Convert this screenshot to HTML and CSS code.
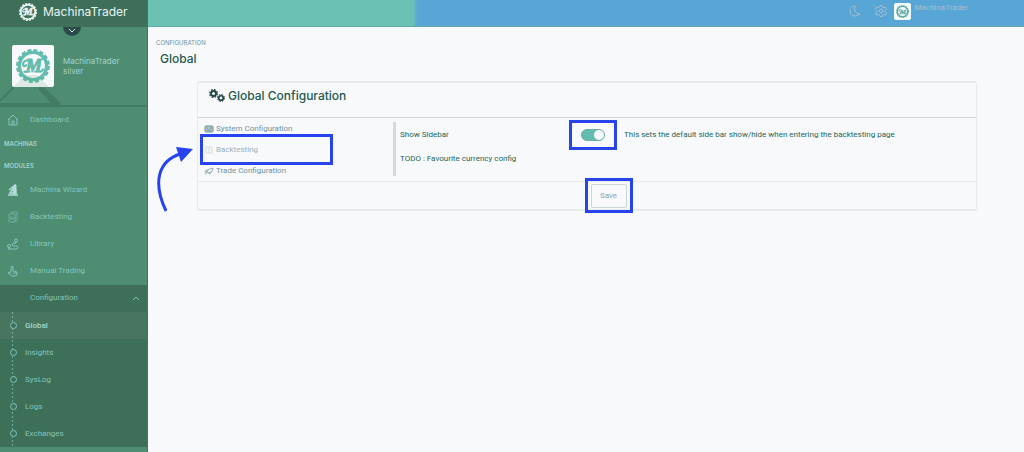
FILE: index.html
```html
<!DOCTYPE html>
<html lang="en">
<head>
<meta charset="utf-8">
<title>MachinaTrader - Global Configuration</title>
<link rel="stylesheet" href="styles.css">
</head>
<body>
<svg class="defs" aria-hidden="true">
  <symbol id="cog-logo" viewBox="0 0 40 40">
    <circle cx="20" cy="20" r="16" fill="none" stroke="currentColor" stroke-width="4"/>
    <circle cx="20" cy="20" r="18" fill="none" stroke="currentColor" stroke-width="4" stroke-dasharray="4.600 2.469"/>
    <path d="M15 14c-5-2-8 3-6 6 2 1 3-1 3-2M9 26c5 3 6-2 8-7M28 26c2 1 4-1 4-3" fill="none" stroke="currentColor" stroke-width="2.500"/>
  </symbol>
  <symbol id="gear" viewBox="0 0 16 16">
    <circle cx="8" cy="8" r="4.500" fill="none" stroke="currentColor" stroke-width="3.400"/>
    <circle cx="8" cy="8" r="7" fill="none" stroke="currentColor" stroke-width="2" stroke-dasharray="3.200 2.298"/>
  </symbol>
</svg>
<div class="app">
  <aside class="sidebar">
    <a class="brand" href="#"><svg class="brand-logo" viewBox="0 0 40 40"><use href="#cog-logo"/><text x="21" y="27" text-anchor="middle" class="logo-letter">M</text></svg><span>MachinaTrader</span></a>
    <div class="user">
      <svg class="user-art" viewBox="0 0 148 80" aria-hidden="true"><path d="M0 74 14 60M40 58 60 77M0 77H58" fill="none" stroke="#437c64" stroke-width="2"/><path d="M40 59 50 68 61 79H54L38 62z"/></svg>
      <button class="collapse" aria-label="Collapse profile"><svg viewBox="0 0 18 10"><path d="M6 2l3 3 3-3"/></svg></button>
      <span class="avatar"><svg viewBox="0 0 40 40"><use href="#cog-logo"/><text x="21" y="27" text-anchor="middle" class="logo-letter">M</text></svg></span>
      <span class="user-name">MachinaTrader<br>silver</span>
      <svg class="avatar-shade" viewBox="0 0 42 18" aria-hidden="true"><path d="M0 18 13 5h12l13 13z"/></svg>
    </div>
    <nav>
      <a class="item" href="#"><svg viewBox="0 0 12 12"><path d="M1 6l5-5 5 5M2 5v6h8V5M5 11V7h2v4"/></svg>Dashboard</a>
      <h2>MACHINAS</h2>
      <h2>MODULES</h2>
      <a class="item" href="#"><svg class="pale" viewBox="0 0 12 12"><path d="M1 11h10M3 9l5-7 1 7zM2 6l5-4" stroke-width="1.500"/><path d="M7 1h2v9H6z" fill="currentColor"/></svg>Machina Wizard</a>
      <a class="item" href="#"><svg class="dim" viewBox="0 0 12 12"><path d="M2 3h6v8H2zM4 3V1h6v9H8M4 5v4M6 6v3M7 7h2"/></svg>Backtesting</a>
      <a class="item" href="#"><svg viewBox="0 0 12 12"><circle cx="2" cy="8" r="1.500"/><circle cx="9" cy="2.500" r="1.500"/><path d="M1 11h9q2-3-1-3H6q-2-2 0-3h3V4M2 9v2"/></svg>Library</a>
      <a class="item" href="#"><svg viewBox="0 0 12 12"><path d="M4 7V2q1-2 2 0v4l4 1v2q0 2-2 2H5L1 8q0-2 3 0M6 8h4"/></svg>Manual Trading</a>
      <div class="group">
        <a class="item open" href="#"><span class="blank"></span>Configuration<svg class="caret" viewBox="0 0 8 6"><path d="M1 5l3-3 3 3"/></svg></a>
        <ul>
          <li><a class="active" href="#">Global</a></li>
          <li><a href="#">Insights</a></li>
          <li><a href="#">SysLog</a></li>
          <li><a href="#">Logs</a></li>
          <li><a href="#">Exchanges</a></li>
        </ul>
      </div>
    </nav>
  </aside>
  <div class="page">
    <header class="topbar">
      <button aria-label="Dark mode"><svg viewBox="0 0 12 12"><path d="M6 1C2 1 1 4 1 6q0 5 5 5 3 0 5-2-4 0-5-3-1-2 0-5z"/></svg></button>
      <button aria-label="Settings"><svg viewBox="0 0 12 12"><path d="M5 .5h2l.5 1.500 1 .5 2-.5 1 2L10 5.500v1L11.500 8l-1 2-2-.5-1 .5L7 11.500H5L4.500 10l-1-.5-2 .5-1-2L2 6.500v-1L.5 4l1-2 2 .5 1-.5z"/><circle cx="6" cy="6" r="1.800"/></svg></button>
      <span class="mini"><svg viewBox="0 0 40 40"><use href="#cog-logo"/><text x="21" y="27" text-anchor="middle" class="logo-letter">M</text></svg></span>
      <span class="account">MachinaTrader</span>
    </header>
    <main>
      <p class="crumb">CONFIGURATION</p>
      <h1>Global</h1>
      <form class="card">
        <h2 class="card-title"><svg viewBox="0 0 18 16" aria-hidden="true"><use href="#gear" x="1" y="1" width="9" height="9"/><use href="#gear" x="9" y="6" width="8" height="8"/></svg>Global Configuration</h2>
        <div class="card-body">
          <div class="tabs">
            <a href="#"><svg viewBox="0 0 10 8"><rect x="1" y="1" width="8" height="6" rx="1" fill="currentColor" fill-opacity=".5"/><path d="M3 3h1M6 3h2M3 5h4"/></svg>System Configuration</a>
            <a class="current marked-tab" href="#"><svg class="faint" viewBox="0 0 10 8"><path d="M2 1h6v6H2zM4 3h2M4 5h2"/></svg>Backtesting
              <svg class="arrow" viewBox="0 0 40 68" aria-hidden="true"><path d="M10 66C-4 36 3 16 24 9" fill="none" stroke="#2743f0" stroke-width="3"/><path d="M20 2 37 4 25 17z" fill="#2743f0" stroke="none"/></svg></a>
            <a href="#"><svg class="thin" viewBox="0 0 10 8"><path d="M3 5q1-4 6-4 0 4-4 5zM4 3H2L1 5h2M5 6v1l2-1V5M1 7l2-1"/></svg>Trade Configuration</a>
          </div>
          <div class="fields">
            <label for="show-sidebar">Show Sidebar</label>
            <span class="marked-switch"><input id="show-sidebar" type="checkbox" role="switch" checked></span>
            <span>This sets the default side bar show/hide when entering the backtesting page</span>
            <p>TODO : Favourite currency config</p>
          </div>
        </div>
        <div class="card-foot"><span class="marked-save"><button class="save" type="button">Save</button></span></div>
      </form>
    </main>
  </div>
</div>
</body>
</html>
```

FILE: styles.css
```css
* { box-sizing: border-box; }
body { margin: 0; font: 8px/12px Roboto, sans-serif; color: #236658; background: #f7f9fb; }
a { color: inherit; text-decoration: none; }
h1, h2, p, ul { margin: 0; padding: 0; font-family: Inter, sans-serif; }
ul { list-style: none; font-family: inherit; }
button { padding: 0; border: 0; background: none; color: inherit; font: inherit; }
svg { display: block; flex: none; fill: none; stroke: currentColor; stroke-width: 1; }
.defs { position: absolute; width: 0; height: 0; }
.logo-letter { font: italic bold 22px "Liberation Serif", serif; fill: currentColor; stroke: currentColor; stroke-width: 1; }

.app { display: flex; min-height: 100vh; }
.sidebar { flex: none; width: 148px; background: #4e8d71; border-right: 1px solid #3e755d; color: #83c5bb; }
.brand { display: flex; align-items: center; gap: 6px; height: 27px; padding: 0 19px 4px; background: #3e6f59; color: #e8f5f3; font: 12px/18px Inter, sans-serif; }
.brand-logo { width: 18px; height: 18px; }
.user { position: relative; display: flex; align-items: center; gap: 9px; height: 80px; padding: 0 12px; border-bottom: 2px solid #437c64; color: #a3d3cf; font: 8px/10px Inter, sans-serif; }
.user-art { position: absolute; left: 0; top: 0; width: 148px; height: 80px; fill: #437c64; stroke: none; }
.collapse { position: absolute; left: 63px; top: 0; width: 18px; height: 9px; border-radius: 0 0 9px 9px; background: #2b4b4a; color: #cfe6e3; }
.avatar { position: relative; width: 42px; height: 42px; padding: 4px; background: #f7f9fb; border-radius: 2px; color: #63bcad; }
.avatar svg { width: 34px; height: 34px; }
.avatar-shade { position: absolute; left: 12px; bottom: 17px; width: 42px; height: 18px; fill: #4e8d71; fill-opacity: .15; stroke: none; }

.item { display: flex; align-items: center; height: 27px; gap: 11px; padding: 0 7px 1px; }
.item svg { width: 12px; height: 12px; }
.item .caret { width: 8px; height: 6px; margin-left: auto; }
.blank { width: 12px; }
.pale { color: #b4dcd8; }
.dim { opacity: .6; }
nav h2 { height: 22px; padding-left: 4px; color: #a3d3cf; font-size: 6px; line-height: 20px; font-weight: 600; }
nav h2 + h2 { height: 21px; }
.group { background: #3e6f59; }
.group ul { background: repeating-linear-gradient(#6fa898 0 2px, transparent 2px 4px) 12px 0 / 1px 100% no-repeat; }
.group li a { display: flex; align-items: center; gap: 8px; height: 27px; padding-left: 10px; }
.group li a::before { content: ""; width: 5px; height: 5px; border: 1px solid #83c5bb; border-radius: 50%; background: #3e6f59; }
.group .active { background: #ffffff0c; color: #a3dacf; font-weight: 500; }

.page { flex: 1; min-width: 0; }
.topbar { display: flex; justify-content: flex-end; align-items: center; gap: 7px; height: 27px; padding: 0 56px 4px 0; border-bottom: 1px solid #62a9ab; background: linear-gradient(90deg, #6bc1b2 0 265px, #57a6d5 270px); color: #a5bfd0; }
.topbar button { margin-right: 7px; }
.topbar button + button { margin-right: 0; }
.topbar button svg { width: 12px; height: 12px; }
.mini { width: 17px; height: 17px; padding: 2px; background: #f3f8fa; border-radius: 2px; color: #63aea9; }
.mini svg { width: 13px; height: 13px; }
.account { margin-left: -3px; padding-bottom: 7px; }
main { padding: 12px 47px 12px 8px; }
.crumb { color: #6f929b; font-size: 6px; line-height: 8px; }
h1 { padding: 3px 0 0 4px; color: #23594e; font-size: 12px; line-height: 18px; font-weight: 500; }

.card { margin: 13px 0 0 41px; border: 1px solid #e6ebed; border-top-width: 2px; border-bottom-width: 2px; border-radius: 3px; }
.card-title { display: flex; align-items: center; gap: 2px; height: 35px; padding: 0 10px 8px; border-bottom: 1px solid #cfd8db; color: #23594e; font-size: 12px; line-height: 18px; font-weight: 500; }
.card-title svg { width: 18px; height: 16px; color: #1f4444; }
.card-body { display: grid; grid-template-columns: 198px 1fr; min-height: 63px; }
.tabs { color: #6f929b; background: linear-gradient(#d2dce0, #d2dce0) right 4px / 3px 54px no-repeat; }
.tabs a { display: flex; align-items: center; gap: 2px; height: 21px; padding-left: 6px; }
.tabs a svg { width: 10px; height: 8px; }
.tabs .current { color: #9cb1b8; }
.faint { opacity: .4; }
.thin { opacity: .7; }
.marked-tab, .marked-switch, .marked-save { position: relative; }
.marked-tab::after, .marked-switch::after, .marked-save::after { content: ""; position: absolute; border: 3px solid #2743f0; pointer-events: none; }
.marked-tab::after { inset: -5px 63px -5px 2px; }
.tabs a .arrow { position: absolute; right: 100%; top: 6px; margin-right: 2px; width: 40px; height: 68px; }
.fields { display: grid; grid-template-columns: 181px 43px 1fr; align-content: start; align-items: center; row-gap: 12px; padding: 11px 0 0 4px; }
.fields p { grid-column: 1 / -1; font-family: inherit; }
.marked-switch { width: 24px; height: 12px; }
.marked-switch::after { inset: -9px -12px; }
.marked-switch input { appearance: none; display: block; width: 24px; height: 12px; margin: 0; border: 1px solid #72aaa8; border-radius: 6px; background: #63bcad; }
.marked-switch input::before { content: ""; display: block; width: 10px; height: 10px; margin-left: 12px; border-radius: 50%; background: #f7f9fb; }
.card-foot { display: flex; justify-content: center; height: 28px; padding: 2px 0 0 43px; border-top: 1px solid #e6ebed; }
.save { display: block; width: 36px; height: 24px; border: 1px solid #cbd5da; border-radius: 2px; color: #8fa2ac; }
.marked-save { height: 24px; }
.marked-save::after { inset: -6px -6px -5px; }
```
